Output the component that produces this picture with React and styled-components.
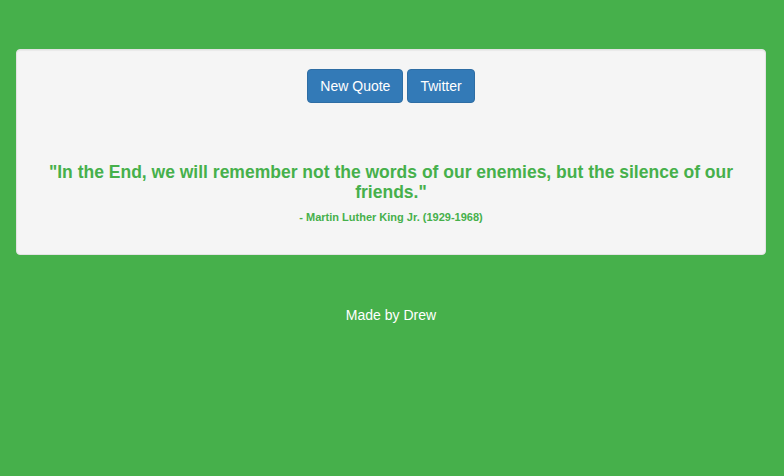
import React from 'react';
import styled, {createGlobalStyle} from "styled-components";

const GlobalStyle = createGlobalStyle`
  html, body {
    margin: 0;
    padding: 0;
    background: #46b04b;
    font-family: "Liberation Sans", Helvetica, Arial, sans-serif;
    font-size: 14px;
    line-height: 1.42857;
  }
`;

const Page = styled.div`
  padding: 49px 18px 0 16px;
  min-height: 476px;
  box-sizing: border-box;
`;

const Well = styled.div`
  box-sizing: border-box;
  width: 750px;
  padding: 19px 19px 30px;
  background: #f5f5f5;
  border: 1px solid #e3e3e3;
  border-radius: 4px;
  box-shadow: inset 0 1px 1px rgba(0, 0, 0, .05);
  text-align: center;
`;

const Buttons = styled.div`
  display: flex;
  justify-content: center;
  gap: 4px;
`;

const Button = styled.button`
  font-family: inherit;
  font-size: 14px;
  line-height: 20px;
  padding: 6px 12px;
  color: #fff;
  background: #337ab7;
  border: 1px solid #2e6da4;
  border-radius: 4px;
  cursor: pointer;
`;

const Quote = styled.h3`
  margin: 59px 0 0;
  color: #46b04b;
  font-size: 17.5px;
  font-weight: bold;
  line-height: 20px;
`;

const Author = styled.p`
  margin: 8px 0 0;
  color: #46b04b;
  font-size: 11px;
  font-weight: bold;
  line-height: 14px;
`;

const Footer = styled.footer`
  margin-top: 50px;
  color: #fff;
  text-align: center;
  font-size: 14px;
  line-height: 20px;
`;

const App = () => {
    return (
        <>
            <GlobalStyle/>
            <Page>
                <Well>
                    <Buttons>
                        <Button>New Quote</Button>
                        <Button>Twitter</Button>
                    </Buttons>
                    <Quote>"In the End, we will remember not the words of our enemies, but the silence of our friends."</Quote>
                    <Author>- Martin Luther King Jr. (1929-1968)</Author>
                </Well>
                <Footer>Made by Drew</Footer>
            </Page>
        </>
    );
};

export default App;
